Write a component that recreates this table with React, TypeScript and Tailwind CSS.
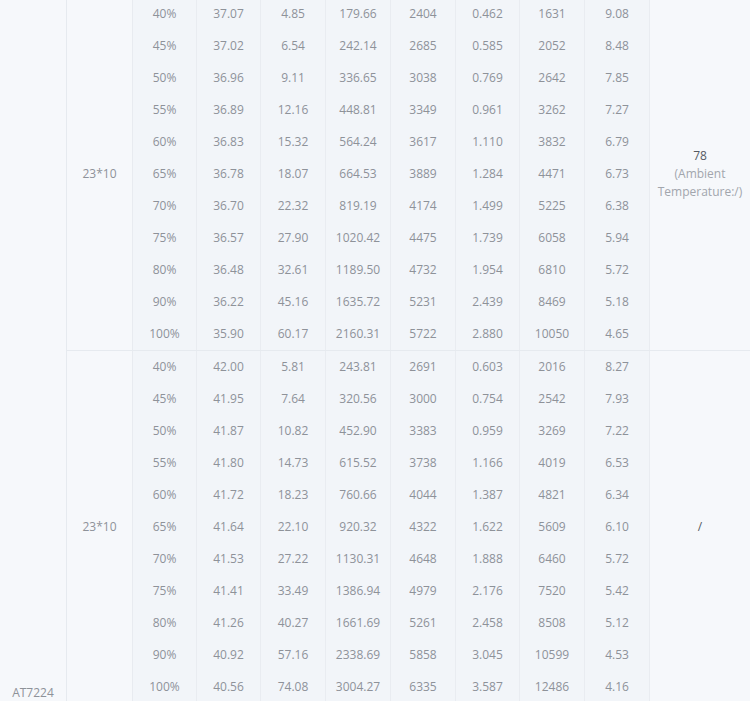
import React from "react";

const g1 = [
  ["40%", "37.07", "4.85", "179.66", "2404", "0.462", "1631", "9.08"],
  ["45%", "37.02", "6.54", "242.14", "2685", "0.585", "2052", "8.48"],
  ["50%", "36.96", "9.11", "336.65", "3038", "0.769", "2642", "7.85"],
  ["55%", "36.89", "12.16", "448.81", "3349", "0.961", "3262", "7.27"],
  ["60%", "36.83", "15.32", "564.24", "3617", "1.110", "3832", "6.79"],
  ["65%", "36.78", "18.07", "664.53", "3889", "1.284", "4471", "6.73"],
  ["70%", "36.70", "22.32", "819.19", "4174", "1.499", "5225", "6.38"],
  ["75%", "36.57", "27.90", "1020.42", "4475", "1.739", "6058", "5.94"],
  ["80%", "36.48", "32.61", "1189.50", "4732", "1.954", "6810", "5.72"],
  ["90%", "36.22", "45.16", "1635.72", "5231", "2.439", "8469", "5.18"],
  ["100%", "35.90", "60.17", "2160.31", "5722", "2.880", "10050", "4.65"],
];

const g2 = [
  ["40%", "42.00", "5.81", "243.81", "2691", "0.603", "2016", "8.27"],
  ["45%", "41.95", "7.64", "320.56", "3000", "0.754", "2542", "7.93"],
  ["50%", "41.87", "10.82", "452.90", "3383", "0.959", "3269", "7.22"],
  ["55%", "41.80", "14.73", "615.52", "3738", "1.166", "4019", "6.53"],
  ["60%", "41.72", "18.23", "760.66", "4044", "1.387", "4821", "6.34"],
  ["65%", "41.64", "22.10", "920.32", "4322", "1.622", "5609", "6.10"],
  ["70%", "41.53", "27.22", "1130.31", "4648", "1.888", "6460", "5.72"],
  ["75%", "41.41", "33.49", "1386.94", "4979", "2.176", "7520", "5.42"],
  ["80%", "41.26", "40.27", "1661.69", "5261", "2.458", "8508", "5.12"],
  ["90%", "40.92", "57.16", "2338.69", "5858", "3.045", "10599", "4.53"],
  ["100%", "40.56", "74.08", "3004.27", "6335", "3.587", "12486", "4.16"],
];

const widths = ["w-[64px]", "w-[64px]", "w-[65px]", "w-[65px]", "w-[65px]", "w-[64px]", "w-[65px]", "w-[65px]"];

function Group({ rows, size, note, top }: { rows: string[][]; size: string; note: React.ReactNode; top?: boolean }) {
  return (
    <div className={"flex " + (top ? "" : "border-t border-[#e6eaef]")}>
      <div className="w-[66px] shrink-0 border-r border-[#e8ebf0] flex items-center justify-center">
        {size}
      </div>
      <div className="flex flex-col bg-[#f2f5f9]">
        {rows.map((r, i) => (
          <div key={i} className="flex h-[32px]">
            {r.map((c, j) => (
              <div
                key={j}
                className={
                  widths[j] +
                  " shrink-0 flex items-center justify-center border-r border-[#e9ecf1]"
                }
              >
                {c}
              </div>
            ))}
          </div>
        ))}
      </div>
      <div className="w-[100px] shrink-0 flex flex-col items-center justify-center text-center">{note}</div>
    </div>
  );
}

export default function App() {
  return (
    <div
      className="w-[750px] h-[701px] overflow-hidden bg-[#f6f8fb] text-[12px] text-[#8e9299]"
      style={{ fontFamily: '"Open Sans", "Liberation Sans", sans-serif' }}
    >
      <div className="flex -mt-[2px]">
        <div className="w-[67px] shrink-0 border-r border-[#e6eaef] flex items-end justify-center leading-[20px]">
          AT7224
        </div>
        <div className="flex flex-col">
          <Group
            rows={g1}
            size="23*10"
            top
            note={
              <>
                <div className="text-[#555a62] leading-[18px]">78</div>
                <div className="text-[#a2a6ad] leading-[18px]">(Ambient</div>
                <div className="text-[#a2a6ad] leading-[18px]">Temperature:/)</div>
              </>
            }
          />
          <Group rows={g2} size="23*10" note={<div className="text-[#555a62]">/</div>} />
        </div>
      </div>
    </div>
  );
}
